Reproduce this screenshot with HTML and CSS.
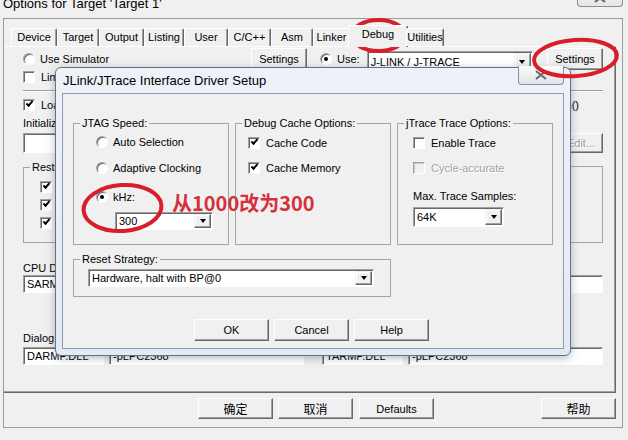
FILE: index.html
```html
<!DOCTYPE html>
<html lang="en">
<head>
    <meta charset="UTF-8">
    <meta name="viewport" content="width=device-width, initial-scale=1.0">
    <title>Options for Target 'Target 1'</title>
    <link rel="stylesheet" href="styles.css">
</head>
<body>
    <!-- Options for Target dialog (background window) -->
    <div class="titlebar">
        <span class="window-title">Options for Target 'Target 1'</span>
        <span class="close-btn top-close">
            <svg width="12" height="10" viewBox="0 0 12 10"><path d="M1 1 L11 9 M11 1 L1 9"/></svg>
        </span>
    </div>

    <div class="window">
        <div class="tabs">
            <span class="tab">Device</span>
            <span class="tab">Target</span>
            <span class="tab">Output</span>
            <span class="tab">Listing</span>
            <span class="tab">User</span>
            <span class="tab">C/C++</span>
            <span class="tab">Asm</span>
            <span class="tab">Linker</span>
            <span class="tab active">Debug</span>
            <span class="tab">Utilities</span>
        </div>

        <!-- most of this panel sits under the setup dialog, so hidden labels are left empty -->
        <div class="panel">
            <div class="column">
                <div class="top-row">
                    <label class="option"><span class="radio"></span>Use Simulator</label>
                    <span class="btn settings-btn">Settings</span>
                </div>
                <label class="option limit-row"><span class="check"></span>Limit Speed to Real-Time</label>
                <div class="separator"></div>
                <div class="load-row">
                    <label class="option"><span class="check checked"></span>Load Application at Startup</label>
                </div>
                <div class="field-label">Initialization File:</div>
                <div class="init-row">
                    <span class="input init-input"></span>
                    <span class="btn edit-btn"></span>
                </div>
                <fieldset class="restore">
                    <legend>Restore Debug Session Settings</legend>
                    <span class="option"><span class="check checked"></span></span>
                    <span class="option"><span class="check checked"></span></span>
                    <span class="option"><span class="check checked"></span></span>
                </fieldset>
                <div class="dll-labels cpu-labels">CPU DLL:</div>
                <div class="dll-row">
                    <span class="input dll-input">SARM.DLL</span>
                    <span class="input param-input"></span>
                </div>
                <div class="dll-labels dialog-labels">Dialog DLL:</div>
                <div class="dll-row">
                    <span class="input dll-input">DARMP.DLL</span>
                    <span class="input param-input">-pLPC2368</span>
                </div>
            </div>

            <div class="column right">
                <div class="top-row">
                    <label class="option"><span class="radio on"></span>Use:</label>
                    <div class="combo driver-combo"><span class="combo-text">J-LINK / J-TRACE</span><span class="combo-btn"></span></div>
                    <span class="btn settings-btn">Settings</span>
                </div>
                <div class="option limit-row"></div>
                <div class="separator"></div>
                <div class="load-row">
                    <label class="option run-main"><span class="check checked"></span>Run to main()</label>
                </div>
                <div class="field-label"></div>
                <div class="init-row">
                    <span class="input init-input"></span>
                    <span class="btn edit-btn">Edit...</span>
                </div>
                <fieldset class="restore">
                    <span class="option"><span class="check checked"></span></span>
                    <span class="option"><span class="check checked"></span></span>
                    <span class="option"><span class="check checked"></span></span>
                </fieldset>
                <div class="dll-labels cpu-labels"></div>
                <div class="dll-row">
                    <span class="input dll-input"></span>
                    <span class="input param-input"></span>
                </div>
                <div class="dll-labels dialog-labels"></div>
                <div class="dll-row">
                    <span class="input dll-input">TARMP.DLL</span>
                    <span class="input param-input">-pLPC2368</span>
                </div>
            </div>
        </div>

        <div class="footer">
            <span class="btn cjk">确定</span>
            <span class="btn cjk">取消</span>
            <span class="btn defaults-btn">Defaults</span>
            <span class="btn cjk help-btn">帮助</span>
        </div>
    </div>

    <!-- JLink setup dialog on top -->
    <div class="modal">
        <div class="modal-title">JLink/JTrace Interface Driver Setup</div>
        <span class="close-btn modal-close">
            <svg width="12" height="10" viewBox="0 0 12 10"><path d="M1 1 L11 9 M11 1 L1 9"/></svg>
        </span>
        <div class="modal-client">
            <div class="groups">
                <fieldset class="group">
                    <legend>JTAG Speed:</legend>
                    <label class="option speed-auto"><span class="radio"></span>Auto Selection</label>
                    <label class="option speed-adaptive"><span class="radio"></span>Adaptive Clocking</label>
                    <label class="option speed-khz"><span class="radio on"></span>kHz:</label>
                    <div class="combo speed-combo"><span class="combo-text">300</span><span class="combo-btn"></span></div>
                </fieldset>
                <fieldset class="group">
                    <legend>Debug Cache Options:</legend>
                    <label class="option cache-code"><span class="check checked"></span>Cache Code</label>
                    <label class="option cache-mem"><span class="check checked"></span>Cache Memory</label>
                </fieldset>
                <fieldset class="group">
                    <legend>jTrace Trace Options:</legend>
                    <label class="option trace-enable"><span class="check"></span>Enable Trace</label>
                    <label class="option trace-cycle disabled"><span class="check"></span>Cycle-accurate</label>
                    <div class="trace-label">Max. Trace Samples:</div>
                    <div class="combo trace-combo"><span class="combo-text">64K</span><span class="combo-btn"></span></div>
                </fieldset>
            </div>
            <fieldset class="group reset-group">
                <legend>Reset Strategy:</legend>
                <div class="combo reset-combo"><span class="combo-text">Hardware, halt with BP@0</span><span class="combo-btn"></span></div>
            </fieldset>
            <div class="modal-buttons">
                <span class="btn">OK</span>
                <span class="btn">Cancel</span>
                <span class="btn">Help</span>
            </div>
        </div>
    </div>

    <!-- red annotations -->
    <svg class="marks" width="628" height="440" viewBox="0 0 628 440">
        <ellipse cx="378.5" cy="35.5" rx="26.5" ry="15.5"/>
        <ellipse cx="575.5" cy="58" rx="41.5" ry="18" transform="rotate(-4 575.5 58)"/>
        <ellipse cx="122.5" cy="208" rx="39" ry="23" transform="rotate(-4 122.5 208)"/>
    </svg>
    <div class="note">从1000改为300</div>
</body>
</html>
```

FILE: styles.css
```css
body {
    margin: 0;
    width: 628px;
    height: 440px;
    overflow: hidden;
    position: relative;
    background: #f0f0f0;
    font-family: "Liberation Sans", Arial, "Noto Sans CJK SC", sans-serif;
    font-size: 11px;
    color: #000;
}

/* background window */

.titlebar {
    display: flex;
    align-items: flex-start;
    height: 18px;
    padding: 0 5px 0 3px;
}

.window-title {
    margin-top: -4px;
    font-size: 13px;
    line-height: 16px;
}

.close-btn {
    display: flex;
    align-items: center;
    justify-content: center;
    width: 46px;
    height: 18px;
    box-sizing: border-box;
    border: 1px solid #8e9096;
    border-top: none;
    border-radius: 0 0 4px 4px;
    background: linear-gradient(#fbfbfb, #e1e4e8);
}

.close-btn path {
    fill: none;
    stroke: #6b6b6b;
    stroke-width: 2.2;
}

.top-close {
    margin-left: auto;
    margin-top: -11px;
}

.window {
    width: 620px;
    height: 410px;
    margin-left: 3px;
    box-sizing: border-box;
    border: 1px solid #9b9b9b;
}

.tabs {
    display: grid;
    grid-template-columns: 46px 42px 45px 40px 44px 43px 42px 37px 56px 38px;
    height: 21px;
    margin-top: 6px;
    padding-left: 7px;
    position: relative;
    z-index: 1;
}

.tab {
    margin-top: 3px;
    border: 1px solid #fff;
    border-right-color: #696969;
    border-bottom: none;
    border-radius: 2px 2px 0 0;
    box-shadow: inset -1px 0 0 #a0a0a0;
    background: #f0f0f0;
    line-height: 17px;
    text-align: center;
    white-space: nowrap;
}

.tab.active {
    margin: 0 -2px -1px;
}

.panel {
    display: grid;
    grid-template-columns: 284px 283px;
    column-gap: 13px;
    align-items: start;
    height: 347px;
    margin-right: 6px;
    padding: 1px 0 0 19px;
    box-sizing: border-box;
    border-top: 1px solid #fff;
    border-right: 1px solid #696969;
    border-bottom: 1px solid #696969;
    box-shadow: inset -1px -1px 0 #a0a0a0;
}

.column {
    display: flex;
    flex-direction: column;
}

.top-row {
    display: flex;
    align-items: center;
    height: 22px;
}

.settings-btn {
    width: 56px;
    height: 22px;
    margin-left: auto;
}

.driver-combo {
    align-self: flex-start;
    width: 166px;
    height: 21px;
    margin: 3px 0 0 7px;
}

.separator {
    height: 0;
    margin-top: 6px;
    border-top: 1px solid #a0a0a0;
    border-bottom: 1px solid #fff;
}

.load-row {
    display: flex;
    height: 14px;
    margin-top: 6px;
}

.run-main {
    margin-left: auto;
    margin-right: 24px;
}

.field-label {
    height: 13px;
    margin-top: 5px;
    line-height: 13px;
}

.init-row {
    display: flex;
    gap: 3px;
    height: 20px;
    margin-top: 3px;
}

.init-input {
    flex: 1;
}

.edit-btn {
    width: 44px;
    color: #a0a0a0;
    text-shadow: 1px 1px 0 #fff;
}

.restore {
    height: 82px;
    margin: 8px 0 0;
    padding: 0;
    box-sizing: border-box;
    border: 1px solid #a5a5a5;
    min-width: 0;
}

.right .restore {
    height: 77px;
    margin-top: 13px;
}

.restore legend,
.group legend {
    margin-left: 6px;
    padding: 0 2px;
    line-height: 13px;
}

.restore .option {
    margin: 4px 0 0 16px;
}

.restore legend + .option {
    margin-top: 6px;
}

.right .restore .option:first-child {
    margin-top: 14px;
}

.dll-labels {
    height: 13px;
    line-height: 13px;
}

.cpu-labels {
    margin-top: 19px;
}

.dialog-labels {
    margin-top: 39px;
}

.dll-row {
    display: flex;
    gap: 5px;
    height: 18px;
    padding-right: 3px;
}

.dialog-labels + .dll-row {
    margin-top: 2px;
}

.right .dll-row {
    padding: 0 0 0 2px;
}

.dll-input {
    width: 81px;
}

.param-input {
    flex: 1;
}

.footer {
    display: flex;
    gap: 5px;
    margin-top: 5px;
    padding: 0 6px 0 194px;
}

.footer .btn {
    width: 75px;
    height: 21px;
}

.defaults-btn {
    margin-left: 1px;
}

.footer .help-btn {
    margin-left: auto;
}

.cjk {
    font-family: "Noto Sans CJK SC", sans-serif;
    font-size: 12px;
}

/* classic controls */

.btn {
    display: flex;
    align-items: center;
    justify-content: center;
    box-sizing: border-box;
    border: 1px solid;
    border-color: #fff #696969 #696969 #fff;
    box-shadow: inset -1px -1px 0 #a0a0a0;
    background: #f0f0f0;
    white-space: nowrap;
}

.option {
    display: flex;
    align-items: center;
    gap: 6px;
    height: 14px;
    line-height: 14px;
    white-space: nowrap;
}

.option.disabled {
    color: #a3a3a3;
    text-shadow: 1px 1px 0 #fff;
}

.radio,
.check {
    position: relative;
    flex: none;
    width: 12px;
    height: 12px;
    box-sizing: border-box;
    border: 1px solid;
    border-color: #a0a0a0 #fff #fff #a0a0a0;
    box-shadow: inset 1px 1px 0 #696969;
    background: #fff;
}

.radio {
    border-radius: 50%;
    margin-right: -1px;
}

.radio.on::after {
    content: "";
    position: absolute;
    left: 3px;
    top: 3px;
    width: 4px;
    height: 4px;
    border-radius: 50%;
    background: #000;
}

.check.checked::after {
    content: "";
    position: absolute;
    left: 2px;
    top: 1px;
    width: 5px;
    height: 2px;
    border-left: 2px solid #000;
    border-bottom: 2px solid #000;
    transform: rotate(-48deg);
}

.disabled .check {
    background: #f0f0f0;
    box-shadow: inset 1px 1px 0 #c8c8c8;
}

.input {
    box-sizing: border-box;
    border: 1px solid;
    border-color: #a0a0a0 #fff #fff #a0a0a0;
    box-shadow: inset 1px 1px 0 #696969;
    background: #fff;
    padding-left: 3px;
    line-height: 16px;
    white-space: nowrap;
    overflow: hidden;
}

.combo {
    display: flex;
    box-sizing: border-box;
    padding: 1px;
    border: 1px solid;
    border-color: #a0a0a0 #fff #fff #a0a0a0;
    box-shadow: inset 1px 1px 0 #696969;
    background: #fff;
}

.combo-text {
    flex: 1;
    display: flex;
    align-items: center;
    padding-left: 2px;
    white-space: nowrap;
    overflow: hidden;
}

.combo-btn {
    display: flex;
    align-items: center;
    justify-content: center;
    width: 17px;
    box-sizing: border-box;
    border: 1px solid;
    border-color: #f0f0f0 #696969 #696969 #f0f0f0;
    box-shadow: inset -1px -1px 0 #a0a0a0, inset 1px 1px 0 #fff;
    background: #f0f0f0;
}

.combo-btn::after {
    content: "";
    border-left: 3px solid transparent;
    border-right: 3px solid transparent;
    border-top: 4px solid #000;
}

/* JLink setup dialog */

.modal {
    position: absolute;
    left: 55px;
    top: 67px;
    width: 516px;
    height: 289px;
    box-sizing: border-box;
    border: 1px solid #66717d;
    border-radius: 6px;
    background: linear-gradient(#edf2f8, #e2eaf3);
    box-shadow: 0 2px 8px rgba(40, 60, 90, 0.35);
}

.modal-title {
    height: 25px;
    box-sizing: border-box;
    padding: 5px 0 0 7px;
    font-size: 13px;
    line-height: 16px;
}

.modal-close {
    position: absolute;
    top: -2px;
    right: 6px;
    height: 19px;
}

.modal-client {
    height: 256px;
    margin: 0 6px;
    box-sizing: border-box;
    padding: 23px 10px 0;
    border: 1px solid #8d9bb0;
    background: #f0f0f0;
}

.groups {
    display: grid;
    grid-template-columns: repeat(3, 156px);
    column-gap: 6px;
}

.group {
    height: 128px;
    margin: 0;
    padding: 0;
    box-sizing: border-box;
    border: 1px solid #a5a5a5;
    min-width: 0;
}

.speed-auto { margin: 5px 0 0 22px; }
.speed-adaptive { margin: 12px 0 0 22px; }
.speed-khz { margin: 15px 0 0 22px; }

.speed-combo {
    width: 98px;
    height: 18px;
    margin: 8px 0 0 41px;
}

.cache-code { margin: 6px 0 0 12px; }
.cache-mem { margin: 11px 0 0 12px; }

.trace-enable { margin: 6px 0 0 15px; }
.trace-cycle { margin: 11px 0 0 15px; }

.trace-label {
    margin: 15px 0 0 15px;
    line-height: 13px;
}

.trace-combo {
    width: 91px;
    height: 20px;
    margin: 4px 0 0 15px;
}

.reset-group {
    width: 318px;
    height: 44px;
    margin-top: 8px;
}

.reset-combo {
    width: 286px;
    height: 18px;
    margin: 3px 0 0 14px;
}

.modal-buttons {
    display: flex;
    gap: 5px;
    margin-top: 22px;
    padding-left: 121px;
}

.modal-buttons .btn {
    width: 75px;
    height: 22px;
}

/* annotations */

.marks {
    position: absolute;
    left: 0;
    top: 0;
    pointer-events: none;
}

.marks ellipse {
    fill: none;
    stroke: #d81e2a;
    stroke-width: 4;
}

.note {
    position: absolute;
    left: 172px;
    top: 193px;
    font-family: "Noto Sans CJK SC", sans-serif;
    font-weight: 700;
    font-size: 20px;
    line-height: 20px;
    color: #d5303b;
}
```
